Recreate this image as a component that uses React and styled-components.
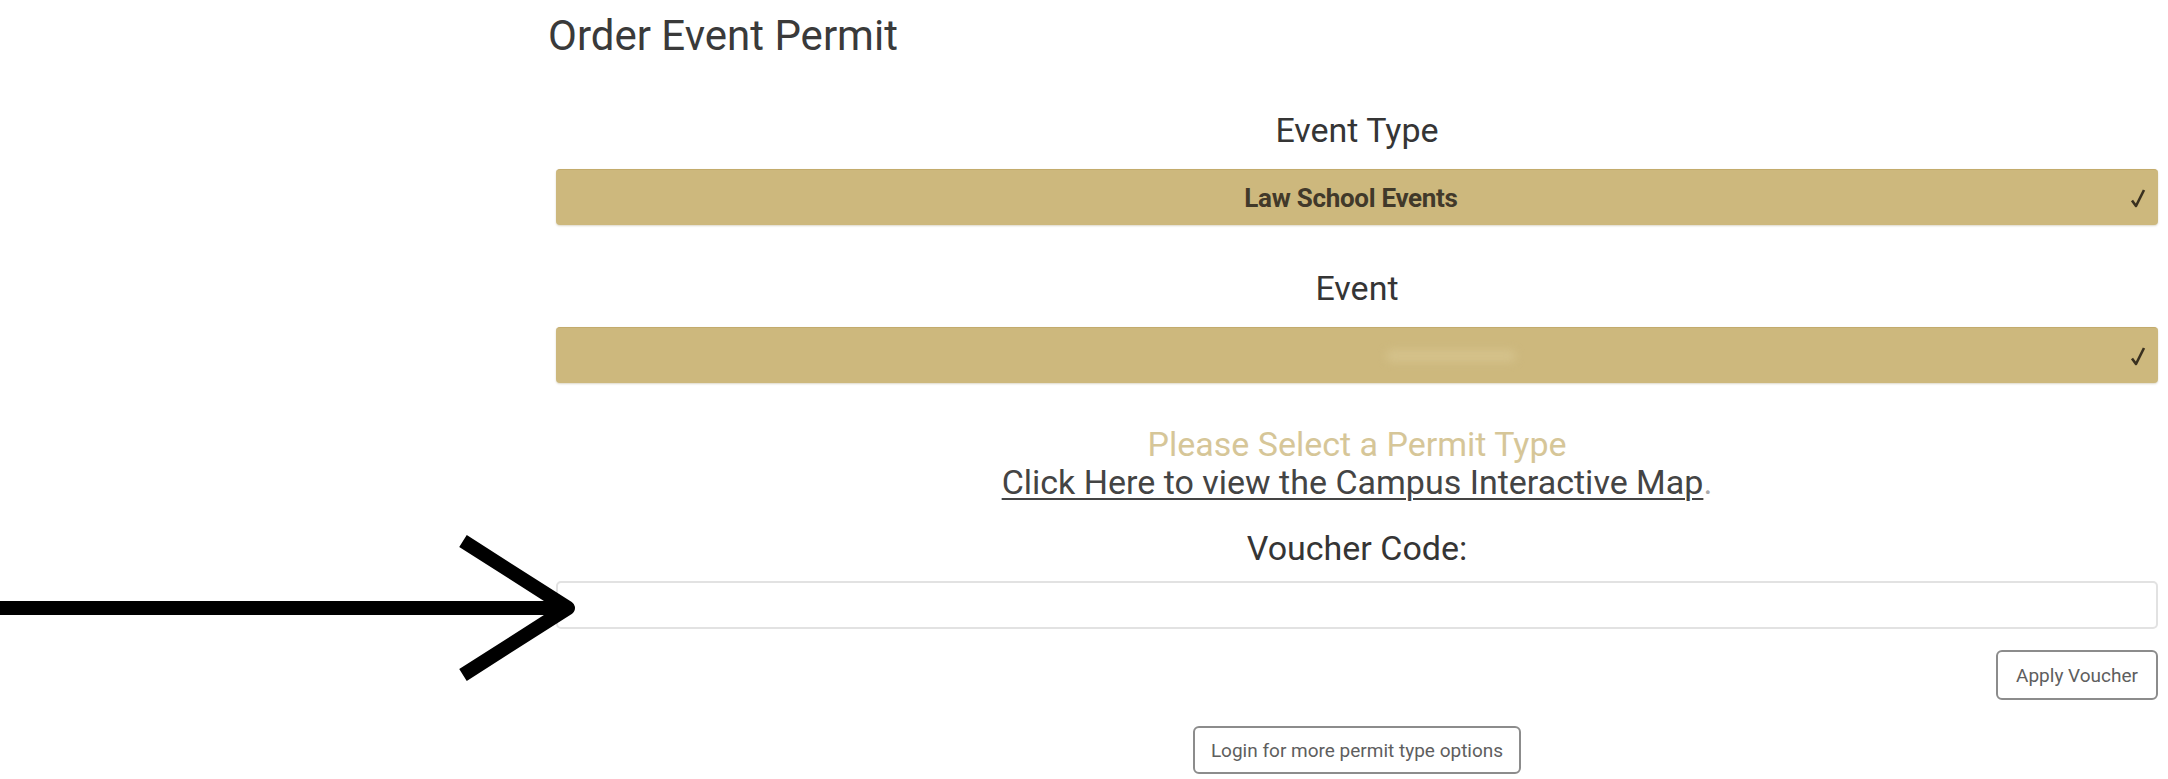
import React from 'react'
import styled, { createGlobalStyle } from 'styled-components'

const GlobalStyle = createGlobalStyle`
  html, body {
    margin: 0;
    padding: 0;
    background: #ffffff;
  }
  body {
    font-family: Roboto, "Liberation Sans", Arial, sans-serif;
  }
`

const Page = styled.div`
  width: 2168px;
  box-sizing: border-box;
  padding: 11px 10px 0 556px;
`

const Title = styled.h1`
  margin: 0 0 0 -8px;
  font-size: 42px;
  line-height: 49px;
  font-weight: 400;
  color: #3a3a3a;
`

const Form = styled.div`
  display: flex;
  flex-direction: column;
`

const FieldLabel = styled.div`
  margin-top: ${props => props.$top}px;
  text-align: center;
  font-size: 34px;
  line-height: 40px;
  color: #353535;
`

const Select = styled.div`
  margin-top: 19px;
  height: 56px;
  box-sizing: border-box;
  display: grid;
  grid-template-columns: 1fr auto 1fr;
  align-items: center;
  background: #cdb87d;
  border-top: 1px solid #c3ab6c;
  border-radius: 4px;
  box-shadow: 0 1px 2px rgba(120, 100, 40, 0.25);
  padding-right: 12px;
`

const SelectValue = styled.span`
  grid-column: 2;
  font-size: 26px;
  font-weight: 700;
  color: #41392a;
  letter-spacing: -0.3px;
`

const Smudge = styled.span`
  grid-column: 2;
  justify-self: center;
  width: 130px;
  height: 12px;
  margin-left: 200px;
  border-radius: 6px;
  background: rgba(230, 215, 170, 0.35);
  filter: blur(5px);
`

const Check = styled.svg`
  grid-column: 3;
  justify-self: end;
  width: 16px;
  height: 20px;
`

const Notice = styled.div`
  margin-top: 42px;
  text-align: center;
  font-size: 34px;
  line-height: 38px;
`

const Hint = styled.div`
  color: #d6c698;
`

const MapLink = styled.a`
  color: #444444;
  text-decoration: underline;
  text-decoration-thickness: 2px;
  text-underline-offset: 4px;
`

const Dot = styled.span`
  color: #aaaaaa;
`

const InputWrap = styled.div`
  position: relative;
  margin-top: 13px;
`

const VoucherInput = styled.input`
  display: block;
  width: 100%;
  height: 48px;
  box-sizing: border-box;
  border: 2px solid #e2e2e2;
  border-radius: 5px;
  background: #ffffff;
  outline: none;
`

const Arrow = styled.svg`
  position: absolute;
  right: calc(100% - 24px);
  top: -48px;
  width: 580px;
  height: 150px;
`

const ButtonRow = styled.div`
  display: flex;
  justify-content: ${props => props.$align};
  margin-top: ${props => props.$top}px;
`

const OutlineButton = styled.button`
  height: ${props => props.$h}px;
  padding: 0 ${props => props.$pad}px;
  box-sizing: border-box;
  background: #ffffff;
  border: 2px solid #8c8c8c;
  border-radius: 6px;
  font-family: Roboto, "Liberation Sans", Arial, sans-serif;
  font-size: 19px;
  color: #5e5e5e;
  cursor: pointer;
`

const CheckMark = () => (
  <Check viewBox="0 0 16 20">
    <path d="M2 12.5 L6 18 L14 2" fill="none" stroke="#3a3120" strokeWidth="2.6" strokeLinejoin="round" />
  </Check>
)

const App = () => {
  return (
    <>
      <GlobalStyle />
      <Page>
        <Title>Order Event Permit</Title>
        <Form>
          <FieldLabel $top={50}>Event Type</FieldLabel>
          <Select>
            <SelectValue>Law School Events</SelectValue>
            <CheckMark />
          </Select>

          <FieldLabel $top={43}>Event</FieldLabel>
          <Select>
            <Smudge />
            <CheckMark />
          </Select>

          <Notice>
            <Hint>Please Select a Permit Type</Hint>
            <div>
              <MapLink href="#">Click Here to view the Campus Interactive Map</MapLink>
              <Dot>.</Dot>
            </div>
          </Notice>

          <FieldLabel $top={27}>Voucher Code:</FieldLabel>
          <InputWrap>
            <Arrow viewBox="0 0 580 150">
              <path d="M0 75 L566 75" stroke="#000" strokeWidth="14" fill="none" />
              <path d="M463 8 L568 75 L463 142" stroke="#000" strokeWidth="14" fill="none" strokeLinejoin="round" />
            </Arrow>
            <VoucherInput type="text" />
          </InputWrap>

          <ButtonRow $align="flex-end" $top={21}>
            <OutlineButton $h={50} $pad={18}>Apply Voucher</OutlineButton>
          </ButtonRow>
          <ButtonRow $align="center" $top={26}>
            <OutlineButton $h={48} $pad={16}>Login for more permit type options</OutlineButton>
          </ButtonRow>
        </Form>
      </Page>
    </>
  )
}

export default App
